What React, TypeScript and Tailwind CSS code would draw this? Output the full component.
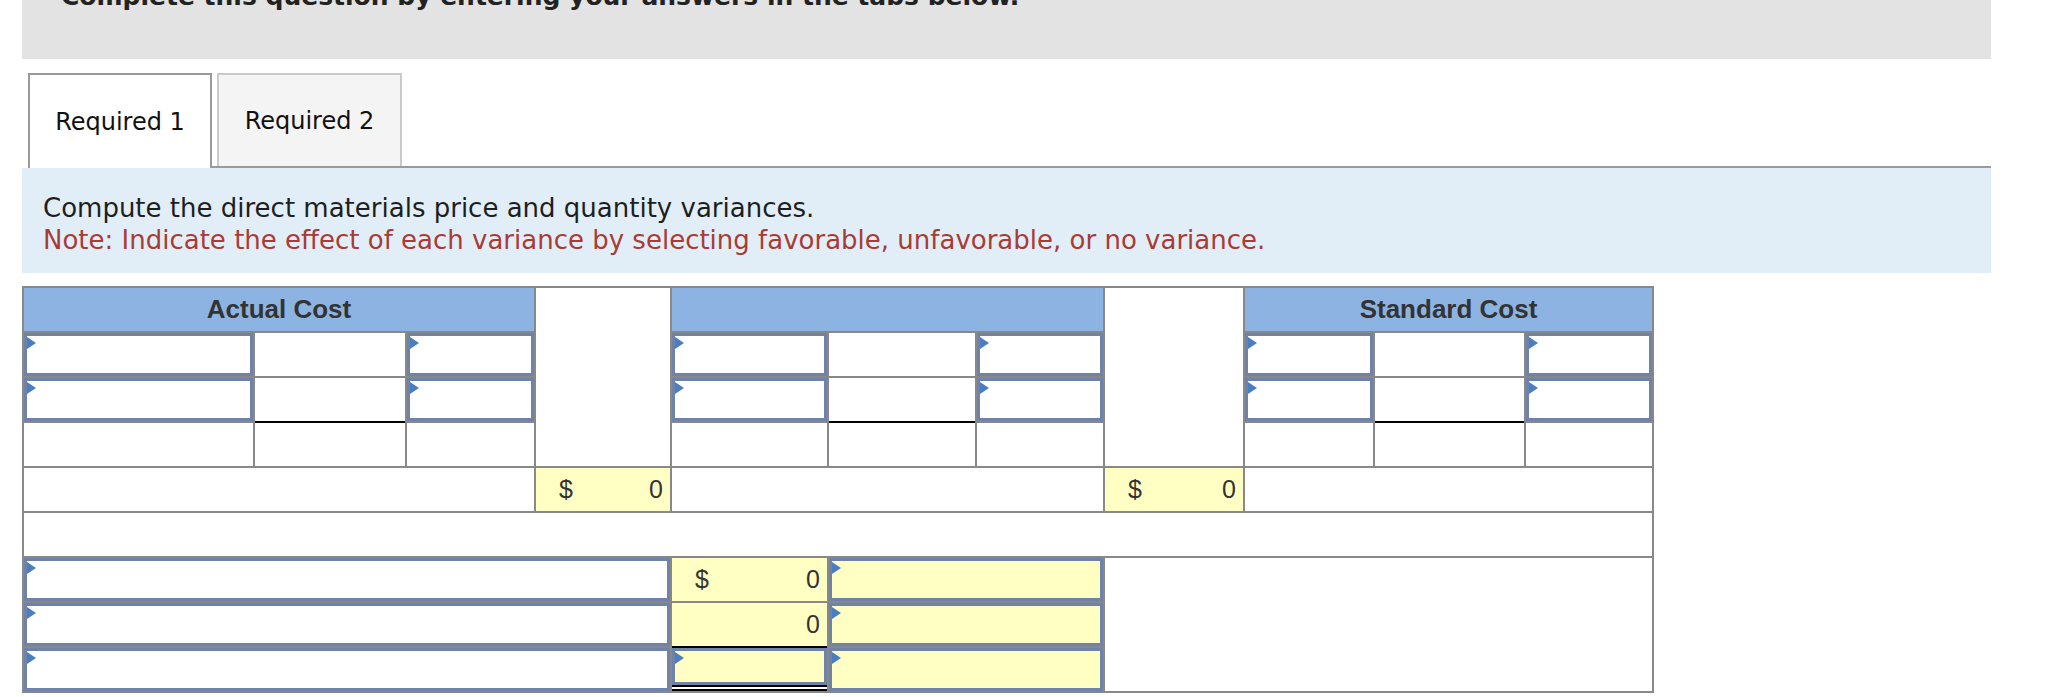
import React from 'react';

function Field({ yellow = false }: { yellow?: boolean }) {
  return (
    <div
      className={`relative h-full border-[3px] border-[#6e82aa] ${yellow ? 'bg-[#ffffc4]' : 'bg-white'}`}
    >
      <span className="absolute left-0 top-[1px] border-y-[6px] border-l-[9px] border-y-transparent border-l-[#4b7ec1]" />
    </div>
  );
}

function Amount({ dollar = false, underline = false }: { dollar?: boolean; underline?: boolean }) {
  return (
    <div
      className={`flex items-center justify-between bg-[#ffffc4] pl-[23px] pr-[7px] text-[25px] text-[#333] ${underline ? 'shadow-[0_2px_0_0_#000]' : ''}`}
    >
      <span>{dollar ? '$' : ''}</span>
      <span>0</span>
    </div>
  );
}

function CostGroup() {
  return (
    <>
      <Field />
      <div className="bg-white" />
      <Field />
    </>
  );
}

export default function App() {
  const groups = [0, 1, 2];

  return (
    <div className="min-h-[697px] bg-white pl-[22px] pr-[68px] font-['DejaVu_Sans',sans-serif]">
      <div className="h-[59px] overflow-hidden bg-[#e3e3e3] pl-[39px]">
        <p className="-mt-[16px] text-[25px] font-bold leading-none text-[#222]">
          Complete this question by entering your answers in the tabs below.
        </p>
      </div>

      <div className="mt-[14px] flex items-end">
        <div className="ml-[6px] flex h-[95px] w-[184px] items-center justify-center border-2 border-b-0 border-[#9a9a9a] bg-white text-[24px] text-[#111]">
          Required 1
        </div>
        <div className="flex flex-1 border-b-2 border-[#9a9a9a] pl-[5px]">
          <div className="flex h-[93px] w-[185px] items-center justify-center border-2 border-b-0 border-[#cacaca] bg-[#f4f4f4] text-[24px] text-[#111]">
            Required 2
          </div>
        </div>
      </div>

      <div className="bg-[#e1eef8] pb-[17px] pl-[21px] pt-[24px] text-[26px] leading-[32px]">
        <p className="text-[#1e1e1e]">Compute the direct materials price and quantity variances.</p>
        <p className="text-[#a93b35]">
          Note: Indicate the effect of each variance by selecting favorable, unfavorable, or no variance.
        </p>
      </div>

      <div className="mt-[13px] grid w-[1632px] grid-cols-[229px_150px_127px_134px_155px_146px_126px_138px_128px_149px_126px] grid-rows-[repeat(9,43px)] gap-[2px] bg-[#888] p-[2px] font-['Liberation_Sans',Arial,sans-serif]">
        {/* header */}
        <div className="col-span-3 flex items-center justify-center bg-[#8db3e2] text-[26px] font-bold text-[#333]">
          Actual Cost
        </div>
        <div className="row-span-4 bg-white" />
        <div className="col-span-3 bg-[#8db3e2]" />
        <div className="row-span-4 bg-white" />
        <div className="col-span-3 flex items-center justify-center bg-[#8db3e2] text-[26px] font-bold text-[#333]">
          Standard Cost
        </div>

        {/* row 1 */}
        {groups.map((g) => (
          <CostGroup key={`a${g}`} />
        ))}

        {/* row 2, middle cell underlined */}
        {groups.map((g) => (
          <React.Fragment key={`b${g}`}>
            <Field />
            <div className="bg-white shadow-[0_2px_0_0_#000]" />
            <Field />
          </React.Fragment>
        ))}

        {/* row 3 */}
        {groups.map((g) => (
          <React.Fragment key={`c${g}`}>
            <div className="bg-white" />
            <div className="bg-white" />
            <div className="bg-white" />
          </React.Fragment>
        ))}

        {/* totals */}
        <div className="col-span-3 bg-white" />
        <Amount dollar />
        <div className="col-span-3 bg-white" />
        <Amount dollar />
        <div className="col-span-3 bg-white" />

        <div className="col-span-11 bg-white" />

        {/* variances */}
        <div className="col-span-4">
          <Field />
        </div>
        <Amount dollar />
        <div className="col-span-2">
          <Field yellow />
        </div>
        <div className="col-span-4 row-span-3 bg-white" />

        <div className="col-span-4">
          <Field />
        </div>
        <Amount underline />
        <div className="col-span-2">
          <Field yellow />
        </div>

        <div className="col-span-4">
          <Field />
        </div>
        <div className="flex flex-col bg-white">
          <div className="flex-1">
            <Field yellow />
          </div>
          <div className="border-b-[6px] border-double border-black" />
        </div>
        <div className="col-span-2">
          <Field yellow />
        </div>
      </div>
    </div>
  );
}
